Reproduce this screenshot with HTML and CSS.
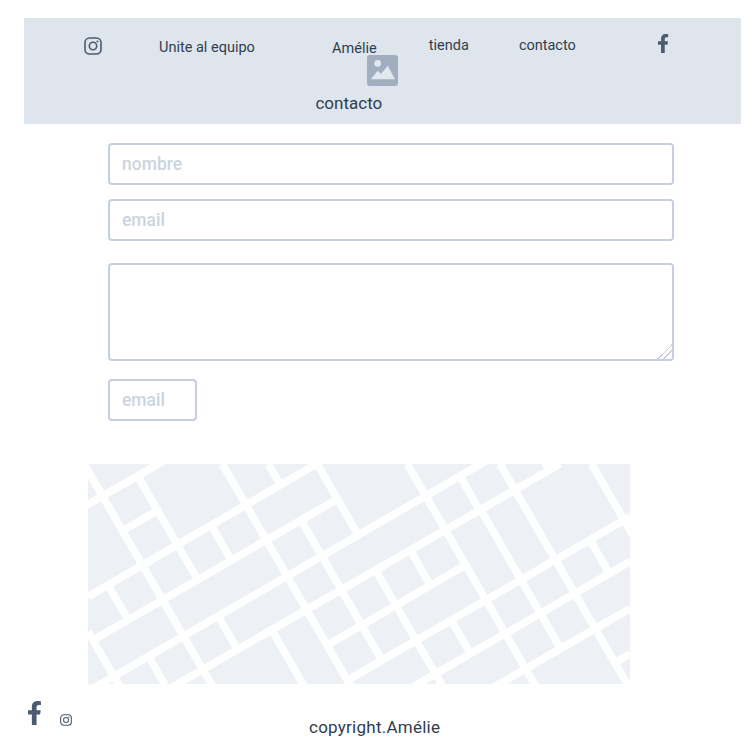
FILE: index.html
```html
<!DOCTYPE html>
<html lang="es">
<head>
    <meta charset="UTF-8">
    <meta name="viewport" content="width=device-width, initial-scale=1.0">
    <title>Amélie - contacto</title>
    <link rel="stylesheet" href="styles.css">
</head>
<body>

    <!-- Menu -->
    <header class="menu">
        <a href="#" class="menu-ig">
            <svg class="ig" viewBox="0 0 18 18" width="18" height="18">
                <rect x="1" y="1" width="16" height="16" rx="4.5"/>
                <circle cx="9" cy="9" r="3.7"/>
                <circle class="ig-dot" cx="13.4" cy="4.6" r="1"/>
            </svg>
        </a>
        <a href="#" class="menu-link menu-equipo">Unite al equipo</a>
        <div class="menu-brand">
            <a href="#" class="menu-link menu-name">Amélie</a>
            <svg class="logo" viewBox="0 0 31 31" width="31" height="31">
                <rect class="logo-bg" width="31" height="31" rx="3"/>
                <circle class="logo-fg" cx="10.7" cy="8.3" r="3.4"/>
                <polygon class="logo-fg" points="3.7,24.3 10.7,15.7 14,19 20.7,10.7 28,24.3"/>
            </svg>
            <span class="menu-title">contacto</span>
        </div>
        <a href="#" class="menu-link menu-tienda">tienda</a>
        <a href="#" class="menu-link menu-contacto">contacto</a>
        <a href="#" class="menu-fb">
            <svg class="fb" viewBox="22 0 298 512" width="11" height="19">
                <path d="M279.14 288l14.22-92.66h-88.91v-60.13c0-25.35 12.42-50.06 52.24-50.06h40.42V6.26S260.43 0 225.36 0c-73.22 0-121.08 44.38-121.08 124.72v70.62H22.89V288h81.39v224h100.17V288z"/>
            </svg>
        </a>
    </header>

    <!-- Formulario -->
    <form class="form">
        <input type="text" class="field" placeholder="nombre">
        <input type="email" class="field field-email" placeholder="email">
        <textarea class="field field-msg"></textarea>
        <input type="text" class="field field-send" placeholder="email">
    </form>

    <!-- Mapa -->
    <div class="map">
        <svg viewBox="24 27 1626 660" width="542" height="220">
            <g class="streets">
                <path d="M12 155L265 10"/>
                <path d="M24 425L730 15"/>
                <path d="M45 552L773 132"/>
                <path d="M40 700L1215 20"/>
                <path d="M270 700L1440 27"/>
                <path d="M741 571L1157 330"/>
                <path d="M802 676L1650 185"/>
                <path d="M1000 695L1650 320"/>
                <path d="M1230 703L1650 461"/>
                <path d="M1610 620L1650 597"/>
                <path d="M127 228L233 166"/>

                <path d="M12 27L405 707"/>
                <path d="M24 530L120 696"/>
                <path d="M173 63L353 374"/>
                <path d="M427 27L820 707"/>
                <path d="M565 27L602 91"/>
                <path d="M663 195L906 616"/>
                <path d="M712 27L835 241"/>
                <path d="M84 390L145 495"/>
                <path d="M394 211L454 316"/>
                <path d="M415 484L473 585"/>
                <path d="M206 604L262 702"/>
                <path d="M576 526L672 693"/>
                <path d="M982 27L1375 707"/>
                <path d="M1141 65L1199 166"/>
                <path d="M1260 27L1650 702"/>
                <path d="M1535 27L1660 243"/>
                <path d="M1530 255L1588 356"/>
                <path d="M991 286L1051 391"/>
                <path d="M887 346L1100 715"/>
                <path d="M1114 496L1172 597"/>
                <path d="M1202 164L1442 581"/>
                <path d="M1395 22L1407 44"/>
            </g>
        </svg>
    </div>

    <!-- Rodapé -->
    <footer class="footer">
        <a href="#" class="footer-fb">
            <svg class="fb" viewBox="22 0 298 512" width="14" height="24">
                <path d="M279.14 288l14.22-92.66h-88.91v-60.13c0-25.35 12.42-50.06 52.24-50.06h40.42V6.26S260.43 0 225.36 0c-73.22 0-121.08 44.38-121.08 124.72v70.62H22.89V288h81.39v224h100.17V288z"/>
            </svg>
        </a>
        <a href="#" class="footer-ig">
            <svg class="ig ig-small" viewBox="0 0 18 18" width="12" height="12">
                <rect x="1" y="1" width="16" height="16" rx="4.5"/>
                <circle cx="9" cy="9" r="3.7"/>
                <circle class="ig-dot" cx="13.4" cy="4.6" r="1"/>
            </svg>
        </a>
        <p class="copyright">copyright.Amélie</p>
    </footer>

</body>
</html>
```

FILE: styles.css
```css
body {
    font-family: Roboto, "Noto Sans", sans-serif;
    margin: 0;
    padding: 0;
    color: #2f3e4e;
    background: white;
}
a {
    text-decoration: none;
    color: inherit;
}

/* Menu */
.menu {
    display: flex;
    align-items: flex-start;
    height: 106px;
    width: 717px;
    margin: 18px 0 0 24px;
    padding-left: 60px;
    box-sizing: border-box;
    background: #dfe5ed;
}
.menu-ig {
    display: block;
    height: 18px;
    margin-top: 19px;
}
.menu-link {
    font-size: 14.5px;
    line-height: 18px;
    white-space: nowrap;
}
.menu-equipo {
    margin: 21px 0 0 57px;
}
.menu-brand {
    display: flex;
    flex-direction: column;
    align-items: center;
    width: 66px;
    margin: 22px 0 0 61px;
}
.menu-name {
    margin-left: 11px;
}
.logo {
    display: block;
    flex: none;
    margin: -3px 0 0 67px;
}
.logo-bg {
    fill: #a0aec0;
}
.logo-fg {
    fill: #e2e8f0;
}
.menu-title {
    font-size: 17px;
    line-height: 20px;
    margin-top: 7px;
}
.menu-tienda {
    margin: 19px 0 0 47px;
}
.menu-contacto {
    margin: 19px 0 0 50px;
}
.menu-fb {
    display: block;
    height: 19px;
    margin: 16px 0 0 82px;
}
.ig {
    display: block;
    fill: none;
    stroke: #4a5c6e;
    stroke-width: 1.6;
}
.ig-dot {
    fill: #4a5c6e;
    stroke: none;
}
.fb {
    display: block;
    fill: #4a5c6e;
}

/* Formulario */
.form {
    width: 566px;
    margin: 19px 0 0 108px;
}
.field {
    display: block;
    width: 100%;
    height: 42px;
    margin: 0;
    padding: 0 12px;
    box-sizing: border-box;
    border: 2px solid #c5d0dc;
    border-radius: 4px;
    background: white;
    font-family: inherit;
    font-size: 17.5px;
    font-weight: 500;
    color: #2f3e4e;
}
.field::placeholder {
    color: #cbd5e0;
    opacity: 1;
}
.field-email {
    margin-top: 14px;
}
.field-msg {
    height: 98px;
    margin-top: 22px;
}
.field-msg::-webkit-resizer {
    background: linear-gradient(135deg, transparent 50%, #c5d0dc 50% 56%, transparent 56% 68%, #c5d0dc 68% 74%, transparent 74%);
}
.field-send {
    width: 89px;
    margin-top: 18px;
}

/* Mapa */
.map {
    width: 542px;
    height: 220px;
    margin: 43px 0 0 88px;
    background: #edf0f5;
}
.map svg {
    display: block;
}
.streets path {
    fill: none;
    stroke: white;
    stroke-width: 23;
}

/* Rodapé */
.footer {
    display: flex;
    align-items: flex-start;
    height: 72px;
    padding: 17px 0 0 28px;
    box-sizing: border-box;
}
.footer-fb {
    display: block;
}
.footer-ig {
    display: block;
    margin: 13px 0 0 18px;
}
.copyright {
    font-size: 17px;
    line-height: 20px;
    letter-spacing: 0.25px;
    margin: 16px 0 0 237px;
    white-space: nowrap;
}
```
